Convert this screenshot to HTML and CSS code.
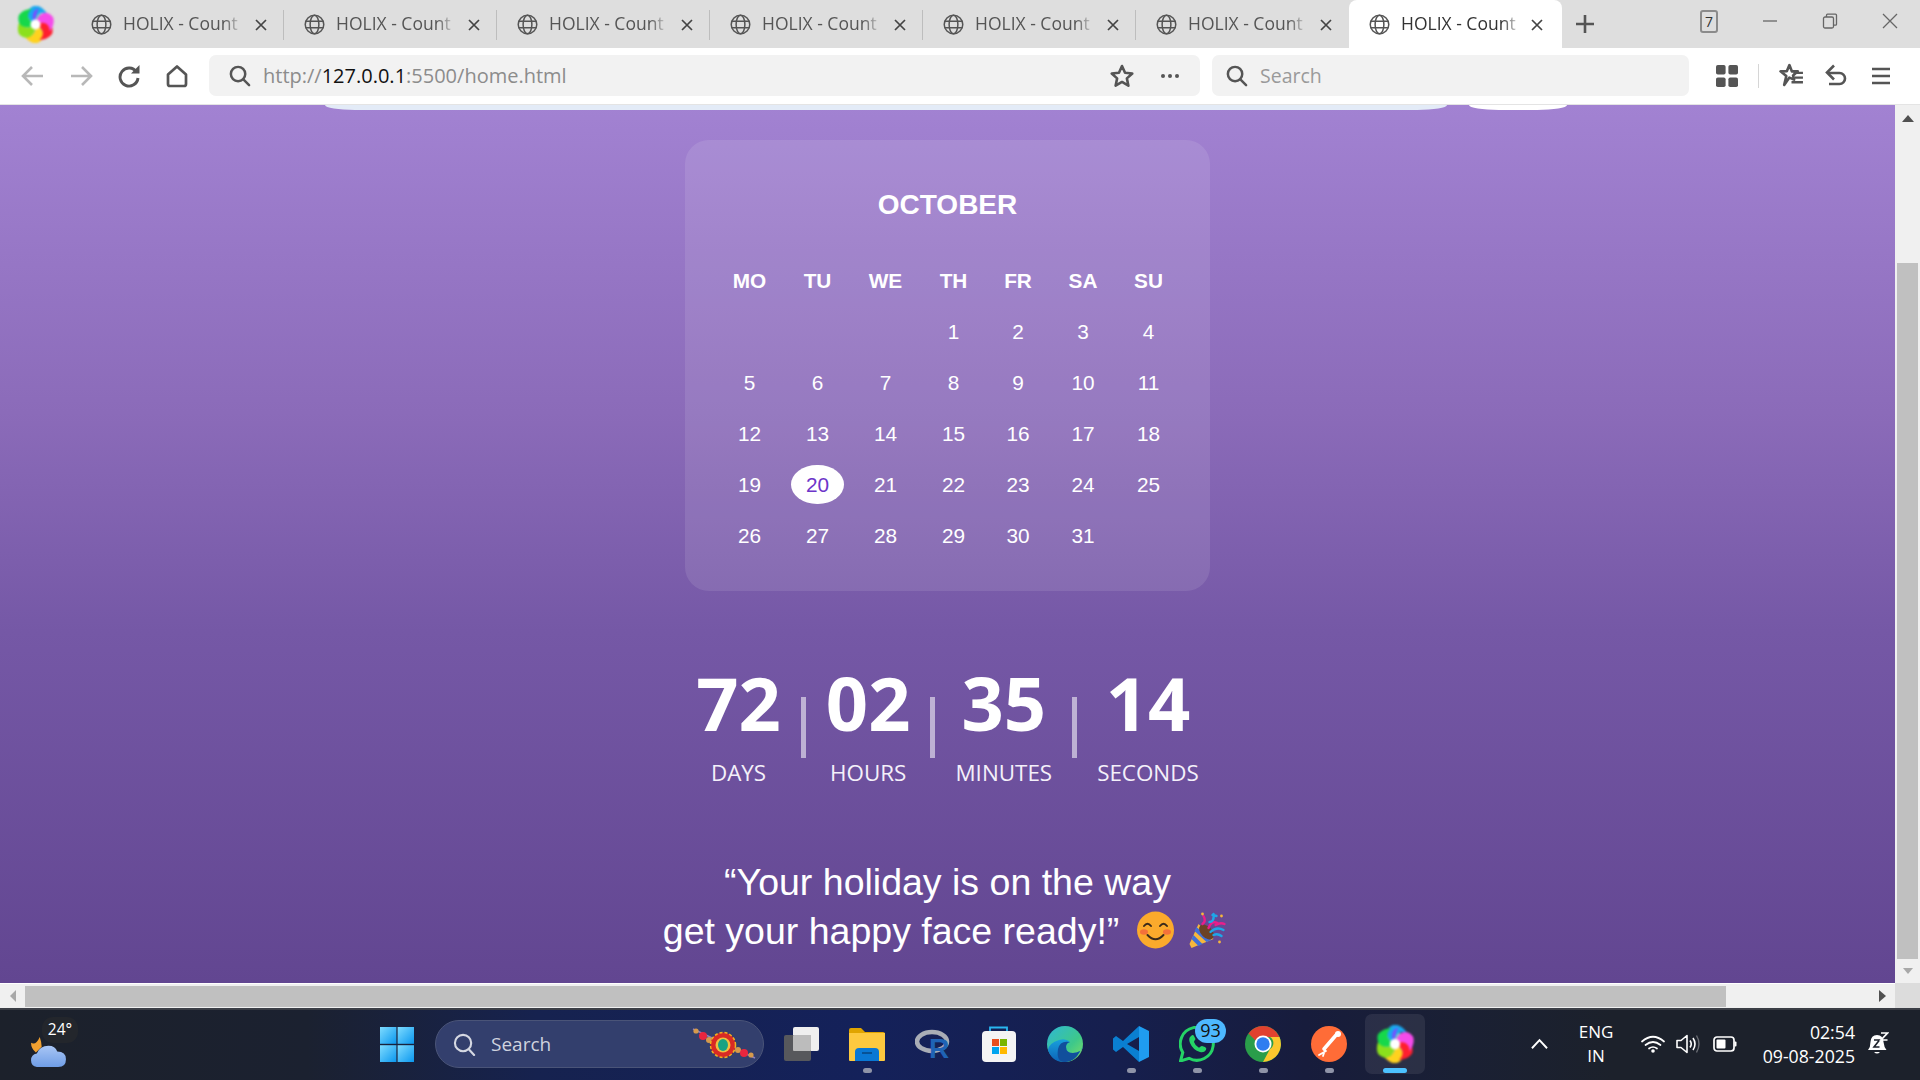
FILE: index.html
```html
<!DOCTYPE html>
<html lang="en">
<head>
<meta charset="utf-8">
<title>HOLIX - Countdown</title>
<link rel="stylesheet" href="styles.css">
</head>
<body>
<svg class="sprite" aria-hidden="true">
  <symbol id="globe" viewBox="0 0 24 24"><g fill="none" stroke="currentColor" stroke-width="1.7"><circle cx="12" cy="12" r="10.6"/><ellipse cx="12" cy="12" rx="5" ry="10.6"/><path d="M2 8.3h20M2 15.7h20"/></g></symbol>
  <symbol id="close" viewBox="0 0 12 12"><path d="M1 1l10 10M11 1L1 11" fill="none" stroke="currentColor" stroke-width="1.7"/></symbol>
  <symbol id="mag" viewBox="0 0 24 24"><g fill="none" stroke="currentColor" stroke-width="2.6"><circle cx="10.5" cy="10.5" r="7.5"/><path d="M16 16l6 6" stroke-linecap="round"/></g></symbol>
  <symbol id="swirl" viewBox="-24 -24 48 48">
    <circle r="15" fill="#8fd0c0"/>
    <g id="petals">
      <path transform="rotate(-60)" fill="#19a8f0" d="M0 0C0-14 10-23 21-13 24-7 23-1 20 6 18-4 10-7 0 0Z"/>
      <path transform="rotate(120)" fill="#ffd21e" d="M0 0C0-14 10-23 21-13 24-7 23-1 20 6 18-4 10-7 0 0Z"/>
      <path transform="rotate(180)" fill="#8be01c" d="M0 0C0-14 10-23 21-13 24-7 23-1 20 6 18-4 10-7 0 0Z"/>
      <path transform="rotate(240)" fill="#16d84a" d="M0 0C0-14 10-23 21-13 24-7 23-1 20 6 18-4 10-7 0 0Z"/>
      <path transform="rotate(60)" fill="#ff1f2e" d="M0 0C0-14 10-23 21-13 24-7 23-1 20 6 18-4 10-7 0 0Z"/>
      <path transform="rotate(10)" fill="#f54bea" d="M0 0C0-14 10-23 21-13 24-7 23-1 20 6 18-4 10-7 0 0Z"/>
      <path transform="rotate(-30)" fill="#7d4bff" d="M0 0C0-12 6-18 14-16 8-12 4-8 0 0Z"/>
    </g>
    <circle r="6.500" fill="#fff"/>
  </symbol>
</svg>

<header class="tabbar">
  <div class="logo-slot"><svg class="swirl swirl-top"><use href="#swirl"/></svg></div>
  <div class="tab"><svg class="ico-globe"><use href="#globe"/></svg><span class="tab-text">HOLIX - Count</span><svg class="ico-close"><use href="#close"/></svg></div>
  <div class="tab"><svg class="ico-globe"><use href="#globe"/></svg><span class="tab-text">HOLIX - Count</span><svg class="ico-close"><use href="#close"/></svg></div>
  <div class="tab"><svg class="ico-globe"><use href="#globe"/></svg><span class="tab-text">HOLIX - Count</span><svg class="ico-close"><use href="#close"/></svg></div>
  <div class="tab"><svg class="ico-globe"><use href="#globe"/></svg><span class="tab-text">HOLIX - Count</span><svg class="ico-close"><use href="#close"/></svg></div>
  <div class="tab"><svg class="ico-globe"><use href="#globe"/></svg><span class="tab-text">HOLIX - Count</span><svg class="ico-close"><use href="#close"/></svg></div>
  <div class="tab"><svg class="ico-globe"><use href="#globe"/></svg><span class="tab-text">HOLIX - Count</span><svg class="ico-close"><use href="#close"/></svg></div>
  <div class="tab tab-active"><svg class="ico-globe"><use href="#globe"/></svg><span class="tab-text">HOLIX - Count</span><svg class="ico-close"><use href="#close"/></svg></div>
  <svg class="ico-plus" viewBox="0 0 20 20"><path d="M10 1v18M1 10h18" stroke="#555" stroke-width="2.6" fill="none"/></svg>
  <div class="tab-count">7</div>
  <svg class="win-btn win-min" viewBox="0 0 16 16"><path d="M1 8h14" stroke="#666" stroke-width="1.3"/></svg>
  <svg class="win-btn win-max" viewBox="0 0 16 16"><g fill="none" stroke="#666" stroke-width="1.3"><rect x="1.5" y="4" width="10" height="11" rx="1.5"/><path d="M4.5 4V2.2q0-1 1-1h8q1 0 1 1v9q0 1-1 1h-2"/></g></svg>
  <svg class="win-btn win-close" viewBox="0 0 16 16"><path d="M1 1l14 14M15 1L1 15" stroke="#666" stroke-width="1.3"/></svg>
</header>

<nav class="toolbar">
  <svg class="tool tool-back" viewBox="0 0 24 24"><path d="M22 12H3M11 3l-9 9 9 9" fill="none" stroke="#b8b8b8" stroke-width="2.6"/></svg>
  <svg class="tool tool-fwd" viewBox="0 0 24 24"><path d="M2 12h19M13 3l9 9-9 9" fill="none" stroke="#b8b8b8" stroke-width="2.6"/></svg>
  <svg class="tool tool-reload" viewBox="0 0 24 24"><path d="M19.5 8A9 9 0 1 0 21 14" fill="none" stroke="#555" stroke-width="2.9"/><path d="M14 9.5h8.5V1z" fill="#555"/></svg>
  <svg class="tool tool-home" viewBox="0 0 24 24"><path d="M3 10.5L12 2.5l9 8V20q0 2-2 2H5q-2 0-2-2z" fill="none" stroke="#555" stroke-width="2.7" stroke-linejoin="round"/></svg>
  <div class="urlbar">
    <svg class="bar-mag"><use href="#mag"/></svg>
    <span class="url"><span class="url-dim">http://</span>127.0.0.1<span class="url-dim">:5500/home.html</span></span>
    <svg class="bar-star" viewBox="0 0 24 24"><path d="M12 2.8l2.8 6.2 6.7.7-5 4.5 1.4 6.7-5.9-3.4-5.9 3.4 1.4-6.7-5-4.5 6.7-.7z" fill="none" stroke="#555" stroke-width="2.4" stroke-linejoin="round"/></svg>
    <svg class="bar-dots" viewBox="0 0 20 6"><circle cx="3" cy="3" r="2" fill="#555"/><circle cx="10" cy="3" r="2" fill="#555"/><circle cx="17" cy="3" r="2" fill="#555"/></svg>
  </div>
  <div class="searchbar">
    <svg class="bar-mag bar-mag-s"><use href="#mag"/></svg>
    <span class="search-text">Search</span>
  </div>
  <svg class="tool tool-grid" viewBox="0 0 22 22"><g fill="#555"><rect x="0" y="0" width="9.6" height="9.6" rx="1.8"/><rect x="12.4" y="0" width="9.6" height="9.6" rx="1.8"/><rect x="0" y="12.4" width="9.6" height="9.6" rx="1.8"/><rect x="12.4" y="12.4" width="9.6" height="9.6" rx="1.8"/></g></svg>
  <span class="tool-sep"></span>
  <svg class="tool tool-favs" viewBox="0 0 24 24"><path d="M10 2l2.300 6H18l-4.500 4 1 4-4.500-2L5 21l2-8.500-5.500-4.500 6-.1z" fill="none" stroke="#555" stroke-width="2.500" stroke-linejoin="round"/><path d="M14 9.500h9M15 14h8M12 18.500h11" stroke="#555" stroke-width="2.300"/></svg>
  <svg class="tool tool-undo" viewBox="0 0 24 24"><path d="M4 9h11.500a5.500 5.500 0 0 1 0 11H5" fill="none" stroke="#555" stroke-width="2.600"/><path d="M10 1.500L3 8.500l7 7" fill="none" stroke="#555" stroke-width="2.600"/></svg>
  <svg class="tool tool-menu" viewBox="0 0 20 20"><path d="M1 3h18M1 10h18M1 17h18" stroke="#555" stroke-width="2.600"/></svg>
</nav>

<div class="main">
  <main class="page">
    <div class="top-strip"><span class="strip-search"></span><span class="strip-btn"></span></div>

    <section class="card">
      <h2 class="month">OCTOBER</h2>
      <div class="cal">
        <b>MO</b><b>TU</b><b>WE</b><b>TH</b><b>FR</b><b>SA</b><b>SU</b>
        <i></i><i></i><i></i><i>1</i><i>2</i><i>3</i><i>4</i>
        <i>5</i><i>6</i><i>7</i><i>8</i><i>9</i><i>10</i><i>11</i>
        <i>12</i><i>13</i><i>14</i><i>15</i><i>16</i><i>17</i><i>18</i>
        <i>19</i><i><span class="today">20</span></i><i>21</i><i>22</i><i>23</i><i>24</i><i>25</i>
        <i>26</i><i>27</i><i>28</i><i>29</i><i>30</i><i>31</i><i></i>
      </div>
    </section>

    <section class="countdown">
      <div class="unit"><span class="num">72</span><span class="lbl">DAYS</span></div>
      <span class="divider"></span>
      <div class="unit"><span class="num">02</span><span class="lbl">HOURS</span></div>
      <span class="divider"></span>
      <div class="unit"><span class="num">35</span><span class="lbl">MINUTES</span></div>
      <span class="divider"></span>
      <div class="unit"><span class="num">14</span><span class="lbl">SECONDS</span></div>
    </section>

    <p class="quote">“Your holiday is on the way<br>get your happy face ready!”
      <svg class="emoji emoji-smile" viewBox="0 0 38 38"><circle cx="19" cy="19" r="18.500" fill="#fbaa2c"/><ellipse cx="7.500" cy="21" rx="4" ry="2.800" fill="#f4713a"/><ellipse cx="30.500" cy="21" rx="4" ry="2.800" fill="#f4713a"/><g fill="none" stroke="#3a2a1a" stroke-width="2" stroke-linecap="round"><path d="M7.500 15q3.500-4.500 7 0M23.500 15q3.500-4.500 7 0"/><path d="M11 24q8 8.500 16 0"/></g></svg>
      <svg class="emoji emoji-party" viewBox="0 0 38 38"><path d="M10 13L25 28 3 37 1 33z" fill="#f6b73c"/><path d="M5 24l9 9-4 2-7-7zM8 16l15 13-5 2L6 20z" fill="#3f6fd8"/><ellipse cx="18" cy="21" rx="5.500" ry="9" transform="rotate(-45 18 21)" fill="#6b4226"/><g fill="none" stroke-width="2.400" stroke-linecap="round"><path d="M14 13q4-3 1-8" stroke="#e91e8c"/><path d="M20 17q3-8 9-5" stroke="#e91e8c"/><path d="M22 21q6-6 13-2" stroke="#1ea7e8"/><path d="M21 11q5 0 4-8M24 4l4 1" stroke="#1ea7e8"/><path d="M25 24q4-2 8 1" stroke="#1ea7e8"/><path d="M27 14q5-3 9-1" stroke="#e91e8c"/></g><g fill="#f6b73c"><circle cx="14" cy="3" r="1.400"/><circle cx="33" cy="5" r="1.400"/><circle cx="31" cy="31" r="1.400"/></g></svg>
    </p>
  </main>
  <aside class="vscroll">
    <span class="arrow-box"><span class="tri tri-up"></span></span>
    <span class="vthumb"></span>
    <span class="arrow-box"><span class="tri tri-down"></span></span>
  </aside>
</div>

<div class="hscroll">
  <span class="harrow"><span class="tri tri-left"></span></span>
  <span class="hthumb"></span>
  <span class="hfill"></span>
  <span class="harrow"><span class="tri tri-right"></span></span>
  <span class="corner"></span>
</div>

<footer class="taskbar">
  <div class="weather">
    <svg class="weather-ico" viewBox="0 0 38 34"><path d="M1 8q5 3 9-6 2 6 2 10l-6 6q-5-4-5-10z" fill="#f0a030"/><defs><linearGradient id="cl" x1="0" y1="0" x2="0" y2="1"><stop offset="0" stop-color="#a9c6f5"/><stop offset="1" stop-color="#6f9de6"/></linearGradient></defs><path d="M7 33q-6-1-6-7 0-6 6-7 3-8 12-8 7 0 9 6 9 0 9 8 0 8-8 8z" fill="url(#cl)"/></svg>
    <span class="temp">24°</span>
  </div>
  <svg class="start" viewBox="0 0 34 35"><defs><linearGradient id="st" x1="0" y1="0" x2="1" y2="1"><stop offset="0" stop-color="#7fdcff"/><stop offset="1" stop-color="#0a97ef"/></linearGradient></defs><g fill="url(#st)"><rect width="16.400" height="16.800"/><rect x="17.600" width="16.400" height="16.800"/><rect y="18.200" width="16.400" height="16.800"/><rect x="17.600" y="18.200" width="16.400" height="16.800"/></g></svg>
  <div class="task-search">
    <svg class="ts-mag" viewBox="0 0 24 24"><g fill="none" stroke="#d5d8e2" stroke-width="2.200"><circle cx="10.500" cy="10.500" r="8.500"/><path d="M16.500 17l5.500 6" stroke-linecap="round"/></g></svg>
    <span class="ts-text">Search</span>
    <svg class="rakhi" viewBox="0 0 64 32"><path d="M1 2L63 31" stroke="#8d7fc0" stroke-width="1.500"/><circle cx="4" cy="4" r="2.600" fill="#d59a4c"/><circle cx="11" cy="9" r="4" fill="#e8263e"/><circle cx="17" cy="13" r="3" fill="#d59a4c"/><circle cx="46" cy="23" r="3" fill="#d59a4c"/><circle cx="52" cy="26" r="4" fill="#e8263e"/><circle cx="59" cy="28" r="2.600" fill="#d59a4c"/><circle cx="31" cy="18" r="12.500" fill="#d92a24" stroke="#f0b020" stroke-width="1.500" stroke-dasharray="3 2"/><circle cx="31" cy="18" r="7.500" fill="#f0c040"/><ellipse cx="31" cy="18" rx="5" ry="6" fill="#17a283"/></svg>
  </div>

  <div class="slot"><svg class="app" viewBox="0 0 36 36"><rect x="10" y="1" width="26" height="24" rx="2" fill="#efefef"/><rect x="1" y="9" width="27" height="26" rx="2" fill="#5d5d5d" opacity=".93"/><rect x="10" y="9" width="18" height="16" rx="1" fill="#bcbcbc"/></svg><span class="dot dot-none"></span></div>
  <div class="slot"><svg class="app" viewBox="0 0 36 36"><path d="M0 4q0-2 2-2h10l4 4h18q2 0 2 2v3H0z" fill="#e0a400"/><path d="M0 7h36v27q0 1-1 1H1q-1 0-1-1z" fill="#fdc93f"/><path d="M6 35V26q0-4 4-4h16q4 0 4 4v9z" fill="#0a78d4"/><path d="M13 27h10" stroke="#074f8f" stroke-width="1.800"/></svg><span class="dot"></span></div>
  <div class="slot"><svg class="app" viewBox="0 0 36 36"><ellipse cx="17" cy="15.500" rx="15" ry="9.500" fill="none" stroke="#a9adb6" stroke-width="4.500"/><text x="14" y="32" class="r-letter">R</text></svg><span class="dot dot-none"></span></div>
  <div class="slot"><svg class="app" viewBox="0 0 36 36"><path d="M9 7V1.500h17V7" fill="none" stroke="#29b6f0" stroke-width="1.800"/><rect x="1" y="5" width="34" height="31" rx="4" fill="#f4f4f4"/><rect x="11" y="13" width="7" height="7" fill="#e8501f"/><rect x="19" y="13" width="7" height="7" fill="#79b500"/><rect x="11" y="21" width="7" height="7" fill="#00a4ef"/><rect x="19" y="21" width="7" height="7" fill="#ffb900"/></svg><span class="dot dot-none"></span></div>
  <div class="slot"><svg class="app" viewBox="0 0 36 36"><defs><linearGradient id="eg" x1="0" y1="0" x2="1" y2="1"><stop offset="0" stop-color="#2fb7d6"/><stop offset=".6" stop-color="#3ec88a"/><stop offset="1" stop-color="#83e060"/></linearGradient><linearGradient id="eb" x1="0" y1="0" x2="0" y2="1"><stop offset="0" stop-color="#18a0dc"/><stop offset="1" stop-color="#0c62b8"/></linearGradient></defs><circle cx="18" cy="18" r="18" fill="url(#eg)"/><path d="M36 20q-1 7-10 7-7 0-7-6 0-4 4-5-4-4-11-2Q2 17 1 24q4 12 16 12 12 0 19-16z" fill="url(#eb)"/><path d="M19 21q0 6 7 6 4 0 7-2-5 11-15 11-9 0-7-13 2-9 12-7-4 1-4 5z" fill="#114f9c"/></svg><span class="dot dot-none"></span></div>
  <div class="slot"><svg class="app" viewBox="0 0 36 36"><path d="M26 0l10 5v26l-10 5z" fill="#1f9cf0"/><path d="M26 0L10 15 3 10l-3 2.500v11L3 26l7-5 16 15V25L14 18l12-7z" fill="#0a7fd1"/></svg><span class="dot"></span></div>
  <div class="slot"><svg class="app" viewBox="0 0 36 36"><path d="M1.500 35l2.300-8.500A16.500 16.500 0 1 1 10 32.300z" fill="none" stroke="#25d366" stroke-width="3"/><path d="M12 10q-3 2-1 7 3 7 10 9 4 1 6-2 1-2-1-3l-3-1q-1 0-2 1-1 1-2 0-3-2-4-5 0-1 1-2 1-1 0-2l-1-2q-1-2-3 0z" fill="#25d366"/></svg><span class="dot"></span><span class="badge">93</span></div>
  <div class="slot"><svg class="app" viewBox="0 0 36 36"><circle cx="18" cy="18" r="18" fill="#2a9d4a"/><path d="M18 0A18 18 0 0 1 34.500 11H18a7 7 0 0 0-7 4L3.500 7.500A18 18 0 0 1 18 0z" fill="#e0412f"/><path d="M34.500 11A18 18 0 0 1 18 36l7-13a7 7 0 0 0 0-12z" fill="#fbc72e"/><circle cx="18" cy="18" r="8.500" fill="#fff"/><circle cx="18" cy="18" r="6.700" fill="#2f7df0"/></svg><span class="dot"></span></div>
  <div class="slot"><svg class="app" viewBox="0 0 36 36"><circle cx="18" cy="18" r="18" fill="#ff6c37"/><g fill="none" stroke="#fff" stroke-linecap="round"><path d="M26 8L13 23" stroke-width="3.600"/><path d="M15 25l-7 4M14 24l-2 6" stroke-width="1.800"/></g><circle cx="27" cy="8" r="3" fill="#fff"/></svg><span class="dot"></span></div>
  <div class="slot slot-active"><svg class="swirl swirl-app"><use href="#swirl"/></svg><span class="dot dot-active"></span></div>

  <div class="tray">
    <svg class="tray-chev" viewBox="0 0 18 12"><path d="M1 10.500L9 2l8 8.500" fill="none" stroke="#fff" stroke-width="2"/></svg>
    <div class="lang"><span>ENG</span><span>IN</span></div>
    <svg class="tray-wifi" viewBox="0 0 24 18"><g fill="none" stroke="#fff" stroke-width="1.700" stroke-linecap="round"><path d="M1 6.500Q12-3 23 6.500"/><path d="M4.500 10q7.500-6 15 0"/><path d="M8 13.500q4-3 8 0"/></g><circle cx="12" cy="16" r="1.800" fill="#fff"/></svg>
    <svg class="tray-vol" viewBox="0 0 24 20"><g fill="none" stroke="#fff" stroke-width="1.600"><path d="M1 6.500h4L11 1.500v17l-6-5H1z" stroke-linejoin="round"/><path d="M14 6.500q2.500 3.500 0 7M17 4q4 6 0 12"/></g><path d="M20.500 1.500q5 8.500 0 17" fill="none" stroke="#6a6d74" stroke-width="1.400"/></svg>
    <svg class="tray-bat" viewBox="0 0 24 16"><rect x="1" y="1" width="20" height="14" rx="3" fill="none" stroke="#fff" stroke-width="1.700"/><rect x="3.500" y="3.500" width="9" height="9" rx="1" fill="#fff"/><path d="M21.500 5.500h1q1 0 1 1v3q0 1-1 1h-1z" fill="#fff"/></svg>
    <div class="clock"><span>02:54</span><span>09-08-2025</span></div>
    <svg class="tray-bell" viewBox="0 0 22 24"><path d="M10 3q6 0 6.500 7 .5 5 3 8H1q2.500-3 2.500-8Q4 3 10 3z" fill="#fff"/><path d="M7 20q3 3 6 0z" fill="#fff"/><g fill="none" stroke="#1c212b" stroke-width="1.600"><path d="M7 8h5.500L7 15h5.500"/></g><path d="M14 1h6.500L14 8h6.500" fill="none" stroke="#fff" stroke-width="1.700"/></svg>
  </div>
</footer>
</body>
</html>
```
FILE: styles.css
```css
* { box-sizing: border-box; }
html, body { margin: 0; width: 1920px; height: 1080px; overflow: hidden; }
body { display: flex; flex-direction: column; font-family: "Open Sans", "Noto Sans", sans-serif; background: #fff; }
.sprite { position: absolute; width: 0; height: 0; }

/* tab strip */
.tabbar { flex: none; height: 48px; background: #dedede; display: flex; align-items: stretch; color: #555; }
.logo-slot { width: 71px; display: flex; align-items: center; padding-left: 17px; }
.swirl { display: block; filter: blur(1px); }
.swirl-top { width: 37px; height: 37px; }
.tab { width: 213px; display: flex; align-items: center; padding-left: 20px; position: relative; }
.tab::after { content: ""; position: absolute; right: 0; top: 10px; height: 30px; width: 1px; background: #bdbdbd; }
.tab-active { background: #fff; border-radius: 8px 8px 0 0; color: #333; }
.tab-active::after, .tab:nth-child(7)::after { display: none; }
.ico-globe { width: 21px; height: 21px; flex: none; margin-right: 11px; color: #555; }
.tab-text { width: 120px; margin-bottom: 2px; font-size: 17.500px; line-height: 24px; white-space: nowrap; flex: none;
  -webkit-mask-image: linear-gradient(to right, #000 84%, rgba(0,0,0,.12) 98%); mask-image: linear-gradient(to right, #000 84%, rgba(0,0,0,.12) 98%); }
.ico-close { width: 12px; height: 12px; flex: none; margin: 2px 0 0 12px; color: #444; }
.tab-active .ico-close { margin-left: 10px; }
.ico-plus { width: 20px; height: 20px; margin: 14px 0 0 13px; flex: none; }
.tab-count { width: 18px; height: 23px; margin: 10px 0 0 105px; border: 2px solid #8b8b8b; border-radius: 3px; font-size: 14px; line-height: 19px; text-align: center; color: #333; flex: none; }
.win-btn { width: 16px; height: 16px; flex: none; margin-top: 13px; }
.win-min, .win-max, .win-close { margin-left: 44px; }

/* toolbar */
.toolbar { flex: none; height: 57px; background: #fff; border-bottom: 1px solid #e4e4e4; display: flex; align-items: center; padding: 0 0 1px 0; }
.tool { flex: none; }
.tool-back { width: 24px; height: 24px; margin-left: 21px; }
.tool-fwd { width: 24px; height: 24px; margin-left: 24px; }
.tool-reload { width: 24px; height: 24px; margin-left: 24px; }
.tool-home { width: 24px; height: 24px; margin-left: 24px; }
.urlbar { width: 991px; height: 41px; margin-left: 20px; background: #f2f2f2; border-radius: 7px; display: flex; align-items: center; padding-left: 19px; color: #555; }
.bar-mag { width: 23px; height: 23px; flex: none; color: #555; }
.url { font-size: 20px; margin-left: 12px; color: #111; white-space: nowrap; flex: 1; }
.url-dim { color: #8c8c8c; }
.bar-star { width: 26px; height: 26px; flex: none; }
.bar-dots { width: 20px; height: 6px; flex: none; margin: 0 20px 0 25px; }
.searchbar { width: 477px; height: 41px; margin-left: 12px; background: #f2f2f2; border-radius: 7px; display: flex; align-items: center; padding-left: 13px; }
.search-text { font-size: 19.500px; color: #9a9a9a; margin-left: 12px; }
.tool-grid { width: 22px; height: 22px; margin-left: 27px; }
.tool-sep { width: 1px; height: 24px; background: #d6d6d6; margin-left: 20px; flex: none; }
.tool-favs { width: 25px; height: 25px; margin-left: 20px; }
.tool-undo { width: 24px; height: 24px; margin-left: 20px; }
.tool-menu { width: 20px; height: 20px; margin-left: 23px; }

/* page */
.main { flex: none; height: 878px; display: flex; }
.page { flex: 1; min-width: 0; overflow: hidden; display: flex; flex-direction: column; align-items: center; color: #fff;
  font-family: "Liberation Sans", Arial, sans-serif;
  background: linear-gradient(to bottom, #a282d2 0%, #8b6bb9 35%, #7558a6 60%, #624691 100%); }
.top-strip { flex: none; height: 5px; width: 100%; display: flex; padding-left: 325px; }
.strip-search { width: 1122px; background: #e3ebf7; border-radius: 0 0 30px 30px / 0 0 5px 5px; }
.strip-btn { width: 98px; margin-left: 22px; background: #fff; border-radius: 0 0 30px 30px / 0 0 5px 5px; }

.card { flex: none; width: 525px; height: 451px; margin-top: 30px; padding: 49px 0 28px; border-radius: 24px; background: rgba(255,255,255,.1); display: flex; flex-direction: column; align-items: center; }
.month { margin: 0 0 34px; font-size: 28px; line-height: 32px; font-weight: 700; }
.cal { display: grid; grid-template-columns: 68px 68px 68px 68px 61px 69px 62px; grid-auto-rows: 51px; }
.cal b, .cal i { display: flex; align-items: center; justify-content: center; font-style: normal; font-size: 20.800px; }
.cal b { font-weight: 700; }
.today { display: block; padding: 8px 14.500px; line-height: 23px; background: #fff; color: #6d35c9; border-radius: 50%; }

.countdown { flex: none; margin-top: 72px; display: flex; gap: 20px; align-items: flex-start; font-family: "Open Sans", "Noto Sans", sans-serif; }
.unit { display: flex; flex-direction: column; align-items: center; }
.num { font-size: 74px; line-height: 80px; font-weight: 700; }
.lbl { margin-top: 16px; font-size: 22.400px; line-height: 28px; color: #f4f0fa; }
.divider { flex: none; width: 5px; height: 61px; margin-top: 34px; background: rgba(255,255,255,.55); }

.quote { flex: none; margin: 71px 0 0; font-size: 37.500px; line-height: 49px; text-align: center; white-space: nowrap; }
.emoji { display: inline-block; width: 39px; height: 38px; vertical-align: -5px; }
.emoji-smile { margin-left: 6px; }
.emoji-party { margin: 0 5px 0 3px; }

/* scrollbars */
.vscroll { flex: none; width: 25px; background: #f0f0f0; display: flex; flex-direction: column; align-items: center; }
.arrow-box { flex: none; height: 26px; display: flex; align-items: center; justify-content: center; }
.arrow-box:last-child { height: 24px; }
.vthumb { flex: none; width: 21px; height: 696px; margin-top: 132px; background: #c0c0c0; }
.tri { display: block; width: 0; height: 0; border-style: solid; border-color: transparent; }
.tri-up { border-width: 0 6px 7px; border-bottom-color: #505050; }
.tri-down { border-width: 6px 5px 0; border-top-color: #a8a8a8; }
.tri-left { border-width: 6px 6px 6px 0; border-right-color: #a8a8a8; }
.tri-right { border-width: 6px 0 6px 7px; border-left-color: #505050; }
.hscroll { flex: none; height: 25px; background: #f0f0f0; display: flex; align-items: center; border-top: 1px solid #fff; }
.harrow { flex: none; width: 25px; display: flex; justify-content: center; }
.hthumb { flex: none; width: 1701px; height: 21px; background: #c0c0c0; }
.hfill { flex: 1; }
.corner { flex: none; width: 25px; height: 25px; margin-top: -1px; background: #dcdcdc; }

/* taskbar */
.taskbar { flex: none; height: 72px; border-top: 2px solid #3b3e46; padding: 4px 0 6px; display: flex; align-items: center; color: #fff;
  background: linear-gradient(to right, #1c212b 0%, #1b2130 16%, #16224f 28%, #14215a 45%, #161f4e 58%, #171c3c 68%, #1a2034 76%, #1c212b 84%, #1c212b 100%); }
.weather { flex: none; width: 380px; height: 60px; position: relative; }
.weather-ico { position: absolute; left: 30px; top: 21px; width: 37px; height: 33px; }
.temp { position: absolute; left: 42px; top: 3px; width: 36px; height: 26px; border-radius: 11px; background: #23262c; font-size: 15.500px; line-height: 25px; text-align: center; }
.start { flex: none; width: 34px; height: 35px; }
.task-search { flex: none; width: 329px; height: 48px; margin: 0 4px 0 21px; border-radius: 24px; background: #333f6d; border: 1.500px solid #4a5478; display: flex; align-items: center; padding-left: 17px; position: relative; }
.ts-mag { width: 23px; height: 23px; flex: none; }
.ts-text { font-size: 19px; color: #cfd3df; margin-left: 15px; }
.rakhi { position: absolute; left: 256px; top: 6px; width: 64px; height: 32px; }
.slot { flex: none; width: 66px; height: 60px; padding-top: 12px; display: flex; flex-direction: column; align-items: center; position: relative; }
.app { flex: none; width: 36px; height: 36px; display: block; }
.r-letter { font-family: "Liberation Sans", sans-serif; font-weight: 700; font-size: 28px; fill: #1f63b5; }
.dot { display: block; flex: none; width: 9px; height: 5px; margin-top: 6px; border-radius: 3px; background: #8f94a8; }
.dot-none { visibility: hidden; }
.slot-active::before { content: ""; position: absolute; left: 3px; top: 0; width: 60px; height: 60px; border-radius: 7px; background: rgba(255,255,255,.08); }
.swirl-app { flex: none; width: 38px; height: 38px; position: relative; margin: -1px 0 -1px; }
.dot-active { width: 24px; background: #4cc2ff; position: relative; }
.badge { position: absolute; left: 31px; top: 5px; width: 31px; height: 24px; border-radius: 12px; background: #4db8ff; color: #111; font-size: 18px; line-height: 23px; text-align: center; }
.tray { flex: 1; display: flex; align-items: center; }
.tray-chev { width: 17px; height: 12px; margin-left: 103px; flex: none; }
.lang { width: 50px; margin-left: 23px; display: flex; flex-direction: column; align-items: center; font-size: 17px; line-height: 24px; flex: none; }
.tray-wifi { width: 24px; height: 18px; margin-left: 20px; flex: none; }
.tray-vol { width: 24px; height: 20px; margin-left: 11px; flex: none; }
.tray-bat { width: 24px; height: 16px; margin-left: 13px; flex: none; }
.clock { width: 106px; margin-left: 12px; display: flex; flex-direction: column; align-items: flex-end; font-size: 17.700px; line-height: 24px; flex: none; }
.tray-bell { width: 22px; height: 24px; margin-left: 12px; flex: none; }
```
